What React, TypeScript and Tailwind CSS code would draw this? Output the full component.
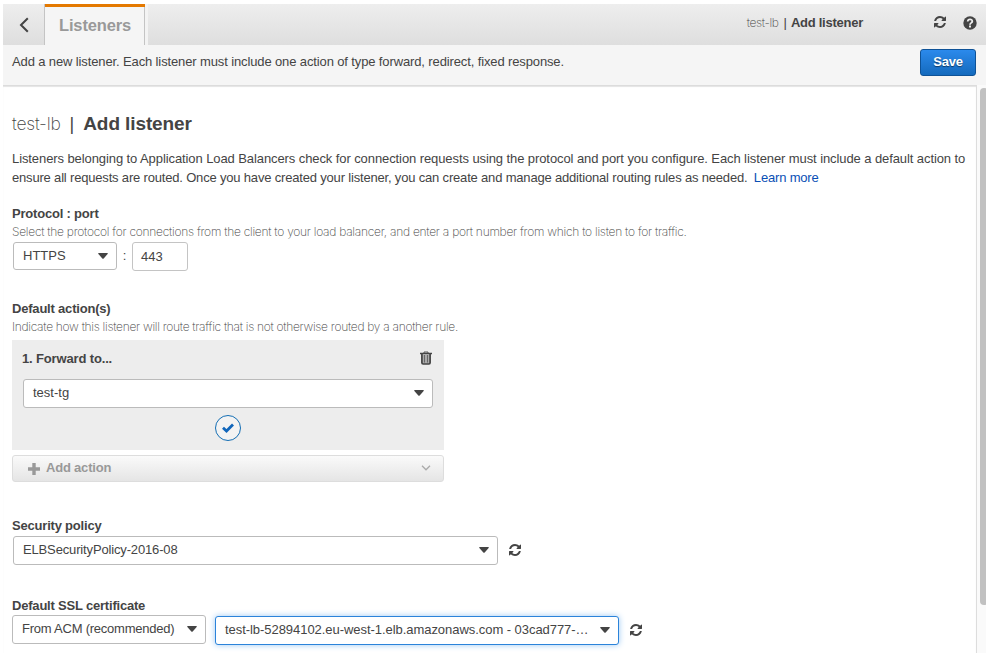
import type { ReactNode } from "react";

const cx = (...parts: string[]) => parts.join(" ");

function RefreshIcon({ className = "" }: { className?: string }) {
  return (
    <svg viewBox="0 128 1536 1536" className={cx("size-[12px] shrink-0 fill-[#444]", className)}>
      <path d="M1511 1056q0 5-1 7-64 268-268 434.500T764 1664q-146 0-282.500-55T238 1452l-129 129q-19 19-45 19t-45-19-19-45v-448q0-26 19-45t45-19h448q26 0 45 19t19 45-19 45l-137 137q71 66 161 102t187 36q134 0 250-65t186-179q11-17 53-117 8-23 30-23h192q13 0 22.500 9.500t9.500 22.500zM1536 256v448q0 26-19 45t-45 19h-448q-26 0-45-19t-19-45 19-45l138-138Q969 384 768 384q-134 0-250 65T332 628q-11 17-53 117-8 23-30 23H50q-13 0-22.500-9.500T18 736v-7q65-268 270-434.500T768 128q146 0 284 55.500T1297 340l130-129q19-19 45-19t45 19 19 45z" />
    </svg>
  );
}

function Caret() {
  return (
    <svg viewBox="0 0 10 6" className="ml-auto h-[6px] w-[10px] shrink-0 fill-[#444]">
      <path d="M0.600 0h8.800q.7.300.200.900L5.700 5.500q-.7.700-1.400 0L.4.900Q-.1.300.6 0z" />
    </svg>
  );
}

function Select({ children, className, text = "" }: { children: ReactNode; className: string; text?: string }) {
  return (
    <div className={cx("flex items-center rounded-[3px] border bg-white pl-[9px] pr-[8px]", className)}>
      <span className={cx("whitespace-nowrap", text)}>{children}</span>
      <Caret />
    </div>
  );
}

function Label({ children, className }: { children: ReactNode; className: string }) {
  return <h2 className={cx("font-bold leading-[18px] tracking-[-0.2px]", className)}>{children}</h2>;
}

export default function App() {
  return (
    <div className="h-[653px] w-[986px] overflow-hidden bg-white pl-[3px] pt-1 font-['Liberation_Sans',Arial,sans-serif] text-[13px] text-[#444]">
      <header className="flex h-[41px] bg-linear-to-b from-[#eeeeee] to-[#dedede]">
        <div className="flex w-[41px] items-center justify-center">
          <svg viewBox="0 0 10 16" className="h-4 w-[10px] fill-none stroke-[#444] stroke-2">
            <path d="M8.800 1.200L2 8l6.800 6.800" />
          </svg>
        </div>
        <div className="w-[101px] border-x border-[#c4c4c4] bg-[#f5f5f5]">
          <div className="-mr-px h-[3px] bg-[#e47900]" />
          <div className="pl-[14px] pt-[8px] text-[16.500px] font-bold leading-5 tracking-[-0.150px] text-[#999]">Listeners</div>
        </div>
        <div className="w-[3px] bg-[#f3f3f3]" />
        <div className="flex flex-1 items-center pb-1 pr-[9px]">
          <span className="ml-auto font-['Inter',sans-serif] text-[12px] font-extralight tracking-[-0.350px]">test-lb</span>
          <span className="ml-[5px] mr-[4px] font-light">|</span>
          <b className="tracking-[-0.250px]">Add listener</b>
          <RefreshIcon className="-mt-px ml-[71px]" />
          <svg viewBox="0 0 14 14" className="ml-[17px] size-[14px]">
            <circle cx="7" cy="7" r="6.700" className="fill-[#444]" />
            <path d="M4.700 5.500c.2-3 4.700-2.700 4.600-.1C9.200 7 7 6.800 7 8.700" className="fill-none stroke-[#eee] stroke-[1.800]" />
            <path d="M6 9.600h2v1.800H6z" className="fill-[#eee]" />
          </svg>
        </div>
      </header>
      <div className="flex h-[40px] justify-between bg-[#f5f5f5] pl-[9px] pr-[10px] pt-1">
        <p className="pt-[3px] leading-5 tracking-[-0.124px]">Add a new listener. Each listener must include one action of type forward, redirect, fixed response.</p>
        <button className="h-[27px] w-[56px] rounded-[3px] border border-[#0e5297] bg-linear-to-b from-[#2b8aec] to-[#146abd] pb-px font-bold tracking-[-0.200px] text-white text-shadow-[0_1px_1px_#00000080]">Save</button>
      </div>
      <div className="flex h-[568px]">
        <main className="w-[974px] shrink-0 border-r border-t border-r-[#ddd] border-t-[#dcdcdc] pl-[9px] shadow-[inset_0_1px_1px_#e4e4e4]">
          <h1 className="flex h-[77px] items-center whitespace-nowrap">
            <span className="font-['Inter',sans-serif] text-[17.500px] font-extralight tracking-[-0.200px]">test-lb</span>
            <span className="ml-[9px] mr-[9px] text-[18px]">|</span>
            <b className="text-[19px] tracking-[-0.100px]">Add listener</b>
          </h1>
          <p className="-mt-[14px] w-[964px] whitespace-nowrap leading-[19px]">
            <span className="tracking-[-0.090px]">Listeners belonging to Application Load Balancers check for connection requests using the protocol and port you configure. Each listener must include a default action to</span><br />
            <span className="tracking-[-0.180px]">ensure all requests are routed. Once you have created your listener, you can create and manage additional routing rules as needed. <a className="ml-[3px] text-[#0a4fb5]">Learn more</a></span>
          </p>
          <Label className="mt-[18px]">Protocol : port</Label>
          <p className="whitespace-nowrap font-['Inter',sans-serif] text-[12px] font-extralight leading-[18px] tracking-[-0.260px]">Select the protocol for connections from the client to your load balancer, and enter a port number from which to listen to for traffic.</p>
          <div className="ml-px mt-[1px] flex h-[30px]">
            <Select className="h-[28px] w-[104px] border-[#bbb]">HTTPS</Select>
            <span className="w-[15px] pt-[4px] text-center">:</span>
            <div className="h-[29px] w-[56px] rounded-[3px] border border-[#c4c4c4] pl-[8px] leading-[28px]">443</div>
          </div>
          <Label className="mt-[28px]">Default action(s)</Label>
          <p className="whitespace-nowrap font-['Inter',sans-serif] text-[12px] font-extralight leading-[18px] tracking-[-0.290px]">Indicate how this listener will route traffic that is not otherwise routed by a another rule.</p>
          <section className="mt-[4px] h-[110px] w-[432px] bg-[#ededed] px-[11px]">
            <div className="flex h-[39px] items-center justify-between">
              <b className="-ml-px -mt-px tracking-[-0.150px]">1. Forward to...</b>
              <svg viewBox="0 0 12 14" className="mr-px mt-[-3px] h-[14px] w-[12px]">
                <path d="M4 2.500V1h4v1.500" className="fill-none stroke-[#555]" />
                <path d="M0 2.500h12" className="stroke-[#444] stroke-[1.500]" />
                <path d="M1.900 3v8.800q0 1.200 1.200 1.200h5.800q1.200 0 1.200-1.200V3" className="fill-[#aaa] stroke-[#444] stroke-[1.700]" />
                <path d="M4.500 4v7.500M7.500 4v7.500" className="stroke-[#555] stroke-[0.800]" />
              </svg>
            </div>
            <Select className="h-[29px] border-[#bbb] pb-[2px]">test-tg</Select>
            <div className="mx-auto mt-[7px] flex size-[26px] items-center justify-center rounded-full border-[1.500px] border-[#146eb4] bg-[#f3f3f3]">
              <svg viewBox="0 0 12 10" className="h-[10px] w-[12px] fill-none stroke-[#1166bb] stroke-[2.800]">
                <path d="M1 4.700l3.500 3.300L11 1.500" />
              </svg>
            </div>
          </section>
          <div className="mt-[5px] flex h-[27px] w-[432px] items-center rounded-[3px] border border-[#ddd] bg-linear-to-b from-[#fafafa] to-[#e5e5e5] pb-[2px] pl-[15px] pr-[12px] text-[#999]">
            <svg viewBox="0 0 12 12" className="mt-[3px] size-[12px] stroke-[#999] stroke-[3.400]"><path d="M0 6h12M6 0v12" /></svg>
            <b className="ml-[6px] tracking-[-0.200px]">Add action</b>
            <svg viewBox="0 0 10 6" className="ml-auto h-[6px] w-[10px] fill-none stroke-[#aaa] stroke-[1.300]"><path d="M1 .8l4 4 4-4" /></svg>
          </div>
          <Label className="mt-[35px]">Security policy</Label>
          <div className="ml-px mt-[1px] flex h-[29px] items-center">
            <Select text="tracking-[-0.150px]" className="h-[29px] w-[485px] border-[#bbb] pb-px">ELBSecurityPolicy-2016-08</Select>
            <RefreshIcon className="-mt-px ml-[11px]" />
          </div>
          <Label className="mt-[32px]">Default SSL certificate</Label>
          <div className="flex h-[30px]">
            <Select text="tracking-[-0.230px]" className="h-[29px] w-[194px] border-[#bbb] pb-[2px]">From ACM (recommended)</Select>
            <Select text="tracking-[-0.050px]" className="ml-[9px] mt-px h-[29px] w-[404px] border-[#2b83da] pb-[2px] shadow-[0_0_6px_#9bc8f3]">test-lb-52894102.eu-west-1.elb.amazonaws.com - 03cad777-…</Select>
            <RefreshIcon className="ml-[11px] mt-[9px]" />
          </div>
        </main>
        <div className="flex-1 overflow-hidden bg-[#fafafa] pl-[3px] pt-[3px]">
          <div className="h-[517px] w-[8px] rounded-[4px] bg-[#c1c1c1]" />
        </div>
      </div>
    </div>
  );
}
